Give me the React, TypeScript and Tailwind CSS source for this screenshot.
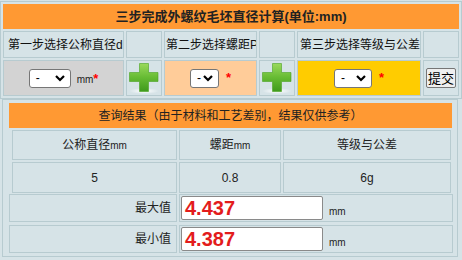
import React from 'react'

const cell = 'border border-[#b7cbd0] flex items-center'

function FakeSelect({ width }: { width: string }) {
  return (
    <div className={`${width} h-[19px] bg-white border border-[#767676] rounded-[3px] flex items-center justify-between pl-[6px] pr-[5px] text-[12px] text-black`}>
      <span>-</span>
      <svg width="10" height="7" viewBox="0 0 10 7">
        <polyline points="1,1 5,5 9,1" fill="none" stroke="#000" strokeWidth="2.2" />
      </svg>
    </div>
  )
}

function PlusIcon() {
  return (
    <svg width="32" height="32" viewBox="0 0 32 32">
      <defs>
        <linearGradient id="plusGrad" x1="0" y1="0" x2="0" y2="1">
          <stop offset="0" stopColor="#9ad95c" />
          <stop offset="0.5" stopColor="#66bb33" />
          <stop offset="1" stopColor="#3f9a1c" />
        </linearGradient>
        <radialGradient id="plusShadow" cx="0.5" cy="0.5" r="0.5">
          <stop offset="0" stopColor="#ffffff" stopOpacity="1" />
          <stop offset="1" stopColor="#ffffff" stopOpacity="0" />
        </radialGradient>
      </defs>
      <ellipse cx="16" cy="29" rx="15" ry="3" fill="url(#plusShadow)" />
      <path
        d="M11.5 1.5h9v9h9.5v9h-9.5v10h-9v-10h-10v-9h10z"
        fill="url(#plusGrad)"
        stroke="#4aa321"
        strokeWidth="0.6"
      />
    </svg>
  )
}

export default function App() {
  return (
    <div
      className="w-[462px] h-[260px] overflow-hidden bg-[#d6e3e7] text-[#111] pt-px"
      style={{ fontFamily: '"Liberation Sans", "Noto Sans CJK SC", sans-serif' }}
    >
      {/* Step table */}
      <div className="w-[462px] border border-[#b7cbd0] p-[2px] flex flex-col gap-[2px]">
        <div className="h-[25px] bg-[#ff9933] flex items-center justify-center text-[13px] font-bold text-[#222]">
          三步完成外螺纹毛坯直径计算(单位:mm)
        </div>

        <div className="grid grid-cols-[121px_36px_93px_36px_124px_36px] gap-[2px] h-[27px]">
          <div className={`${cell} overflow-hidden whitespace-nowrap pl-[4px] text-[12px]`}>第一步选择公称直径d</div>
          <div className={cell} />
          <div className={`${cell} overflow-hidden whitespace-nowrap pl-[1px] text-[12px]`}>第二步选择螺距P</div>
          <div className={cell} />
          <div className={`${cell} overflow-hidden whitespace-nowrap pl-[2px] text-[12px]`}>第三步选择等级与公差</div>
          <div className={cell} />
        </div>

        <div className="grid grid-cols-[121px_36px_93px_36px_124px_36px] gap-[2px] h-[36px]">
          <div className={`${cell} justify-center gap-[6px] bg-[#d3d3d3]`}>
            <FakeSelect width="w-[42px]" />
            <span className="text-[10px] text-[#222] mt-[2px]">
              mm<span className="text-[13px] font-bold text-[#ff0000]">*</span>
            </span>
          </div>
          <div className={`${cell} justify-center`}>
            <PlusIcon />
          </div>
          <div className={`${cell} justify-center gap-[7px] bg-[#ffcc99]`}>
            <FakeSelect width="w-[29px]" />
            <span className="text-[13px] font-bold text-[#ff0000]">*</span>
          </div>
          <div className={`${cell} justify-center`}>
            <PlusIcon />
          </div>
          <div className={`${cell} justify-center gap-[7px] bg-[#ffcc00]`}>
            <FakeSelect width="w-[38px]" />
            <span className="text-[13px] font-bold text-[#ff0000]">*</span>
          </div>
          <div className={`${cell} justify-center`}>
            <button className="w-[30px] h-[20px] bg-[#efefef] border border-[#767676] rounded-[2px] text-[13px] text-black flex items-center justify-center leading-none">
              提交
            </button>
          </div>
        </div>
      </div>

      {/* Result panel */}
      <div className="ml-[2px] w-[456px] border border-[#b7cbd0] pt-[3px] pb-[3px] pl-[6px] pr-[2px] flex flex-col">
        <div className="w-[443px] h-[25px] bg-[#ff9933] flex items-center justify-center text-[12px] text-[#222]">
          查询结果（由于材料和工艺差别，结果仅供参考）
        </div>

        <div className="ml-[3px] mt-[2px] grid grid-cols-[165px_102px_168px] grid-rows-[30px_31px] gap-[2px] text-[12px] text-[#222]">
          <div className={`${cell} justify-center`}>公称直径<span className="text-[10px]">mm</span></div>
          <div className={`${cell} justify-center`}>螺距<span className="text-[10px]">mm</span></div>
          <div className={`${cell} justify-center`}>等级与公差</div>
          <div className={`${cell} justify-center`}>5</div>
          <div className={`${cell} justify-center`}>0.8</div>
          <div className={`${cell} justify-center`}>6g</div>
        </div>

        <div className="mt-px flex flex-col gap-[3px]">
          {[
            { label: '最大值', value: '4.437' },
            { label: '最小值', value: '4.387' },
          ].map((row) => (
            <div key={row.label} className="grid grid-cols-[168px_274px] gap-[2px] h-[28px]">
              <div className={`${cell} justify-end pr-[5px] text-[12px] text-[#222]`}>{row.label}</div>
              <div className={`${cell} pl-px`}>
                <div className="w-[142px] h-[24px] bg-white border border-[#8a8a8a] rounded-[2px] flex items-center pl-[3px] text-[20px] font-bold text-[#e31c1c] leading-none">
                  {row.value}
                </div>
                <span className="ml-[6px] mt-[6px] text-[10px] text-[#222]">mm</span>
              </div>
            </div>
          ))}
        </div>
      </div>
    </div>
  )
}
